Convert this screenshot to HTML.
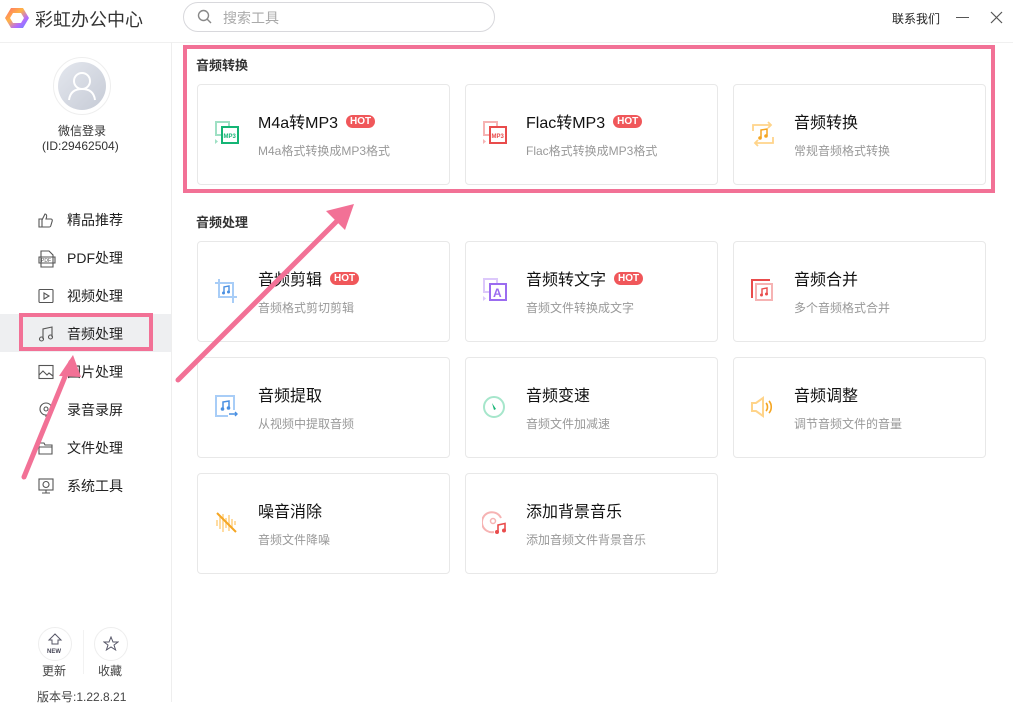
<!DOCTYPE html>
<html><head><meta charset="utf-8"><style>
*{margin:0;padding:0;box-sizing:border-box}
body{width:1013px;height:702px;background:#fff;position:relative;overflow:hidden;font-family:"Liberation Sans","Noto Sans CJK SC",sans-serif;color:#222}
.a{position:absolute}
.card{position:absolute;width:253px;height:101px;border:1px solid #e8e8e8;border-radius:4px;background:#fff}
.card .t{position:absolute;left:60px;top:29px;font-size:16px;color:#111;white-space:nowrap;line-height:20px}
.card .s{position:absolute;left:60px;top:58px;font-size:12px;color:#999;white-space:nowrap;line-height:16px}
.hot{display:inline-block;background:#f0575a;color:#fff;font-size:10px;font-weight:bold;border-radius:7px;padding:0 4px;height:13px;line-height:13px;vertical-align:4px;margin-left:8px}
.card svg{position:absolute;left:16px;top:36px}
.nav{position:absolute;left:0;width:171px;height:38px;font-size:14px;color:#222}
.nav span{position:absolute;left:67px;top:9px}
.nav svg{position:absolute;left:38px;top:11px}
.sec{position:absolute;left:196px;font-size:13px;font-weight:bold;color:#333}
</style></head><body>
<!-- header -->
<svg class="a" style="left:4px;top:5px" width="26" height="26" viewBox="0 0 26 26"><defs><linearGradient id="g" x1="0" y1="0" x2="1" y2="1"><stop offset="0" stop-color="#ff6a6a"/><stop offset=".4" stop-color="#ffb347"/><stop offset=".7" stop-color="#b36bff"/><stop offset="1" stop-color="#5b8cff"/></linearGradient></defs><path d="M7 3h12l6 10-6 10H7L1 13z M9 8l-3 5 3 5h8l3-5-3-5z" fill="url(#g)" fill-rule="evenodd"/></svg>
<div class="a" style="left:35px;top:6px;font-size:18px;color:#333">彩虹办公中心</div>
<div class="a" style="left:183px;top:2px;width:312px;height:30px;border:1px solid #d8d8dc;border-radius:15px"></div>
<svg class="a" style="left:197px;top:9px" width="16" height="16" viewBox="0 0 16 16"><circle cx="6.5" cy="6.5" r="5" fill="none" stroke="#888" stroke-width="1.4"/><path d="M10 10l4 4" stroke="#888" stroke-width="1.4"/></svg>
<div class="a" style="left:223px;top:8px;font-size:14px;color:#aaa">搜索工具</div>
<div class="a" style="left:892px;top:10px;font-size:12px;color:#222">联系我们</div>
<div class="a" style="left:956px;top:17px;width:13px;height:1px;background:#555"></div>
<svg class="a" style="left:990px;top:11px" width="13" height="13"><path d="M1 1l11 11M12 1L1 12" stroke="#555" stroke-width="1.2"/></svg>
<div class="a" style="left:0;top:42px;width:1013px;height:1px;background:#f0f0f0"></div>
<div class="a" style="left:171px;top:42px;width:1px;height:660px;background:#eee"></div>
<!-- profile -->
<div class="a" style="left:53px;top:57px;width:58px;height:58px;border-radius:50%;border:1px solid #eee;background:#fff"></div>
<div class="a" style="left:58px;top:62px;width:48px;height:48px;border-radius:50%;background:linear-gradient(135deg,#e4e7ee,#c6cbd6)"></div>
<svg class="a" style="left:58px;top:62px" width="48" height="48"><circle cx="24" cy="19" r="8" fill="none" stroke="#fff" stroke-width="2"/><path d="M11 38c1-8 6-11 13-11s12 3 13 11" fill="none" stroke="#fff" stroke-width="2"/></svg>
<div class="a" style="left:58px;top:122px;font-size:12px;color:#333">微信登录</div>
<div class="a" style="left:42px;top:139px;font-size:12px;color:#333">(ID:29462504)</div>
<!-- nav -->
<div class="nav" style="top:201px"><svg width="16" height="16" viewBox="0 0 16 16" fill="none" stroke="#555" stroke-width="1.1"><path d="M1 7h3v8H1zM4 8l3-6c1 0 2 1 1.6 3L8 7h5c1 0 1.5 1 1.2 2l-1.5 5c-.2.6-.7 1-1.3 1H4"/></svg><span>精品推荐</span></div>
<div class="nav" style="top:239px"><svg width="18" height="18" viewBox="0 0 18 18" fill="none" stroke="#555" stroke-width="1.1"><path d="M3 1h8l4 4v12H3zM1 7h16v6H1z"/><text x="3" y="12" font-size="5" fill="#555" stroke="none" font-family="Liberation Sans">PDF</text></svg><span>PDF处理</span></div>
<div class="nav" style="top:277px"><svg width="16" height="16" fill="none" stroke="#555" stroke-width="1.1"><rect x="1" y="1.5" width="14" height="13" rx="1"/><path d="M6 5v6l5-3z"/></svg><span>视频处理</span></div>
<div class="a" style="left:0;top:314px;width:171px;height:38px;background:#eeeff1"></div>
<div class="nav" style="top:315px"><svg width="16" height="16" fill="none" stroke="#555" stroke-width="1.1"><path d="M5 13V3l9-2v10"/><circle cx="3.5" cy="13" r="2"/><circle cx="12.5" cy="11" r="2"/></svg><span>音频处理</span></div>
<div class="nav" style="top:353px"><svg width="16" height="16" fill="none" stroke="#555" stroke-width="1.1"><rect x="1" y="1.5" width="14" height="13"/><path d="M1 11l4-4 4 4 2-2 4 3"/></svg><span>图片处理</span></div>
<div class="nav" style="top:391px"><svg width="16" height="16" fill="none" stroke="#555" stroke-width="1.1"><circle cx="8" cy="7" r="6"/><circle cx="8" cy="7" r="2"/><path d="M8 13v2"/></svg><span>录音录屏</span></div>
<div class="nav" style="top:429px"><svg width="16" height="16" fill="none" stroke="#555" stroke-width="1.1"><path d="M1 3h5l1 2h7v9H1zM1 7h13"/></svg><span>文件处理</span></div>
<div class="nav" style="top:467px"><svg width="16" height="16" fill="none" stroke="#555" stroke-width="1.1"><rect x="1" y="1" width="14" height="11"/><circle cx="8" cy="6.5" r="3"/><path d="M8 12v3M4 15h8"/></svg><span>系统工具</span></div>
<!-- bottom -->
<div class="a" style="left:38px;top:627px;width:34px;height:34px;border-radius:50%;border:1px solid #eee"></div>
<svg class="a" style="left:46px;top:633px" width="18" height="22"><path d="M9 1L3 7h3v4h6V7h3z" fill="none" stroke="#556" stroke-width="1"/><text x="1" y="20" font-size="6" font-weight="bold" fill="#445" font-family="Liberation Sans">NEW</text></svg>
<div class="a" style="left:83px;top:630px;width:1px;height:44px;background:#f2f2f2"></div>
<div class="a" style="left:94px;top:627px;width:34px;height:34px;border-radius:50%;border:1px solid #eee"></div>
<svg class="a" style="left:103px;top:636px" width="16" height="16"><path d="M8 1l2 5h5l-4 3 1.6 5L8 11l-4.6 3L5 9 1 6h5z" fill="none" stroke="#556" stroke-width="1"/></svg>
<div class="a" style="left:42px;top:662px;font-size:12px;color:#444">更新</div>
<div class="a" style="left:98px;top:662px;font-size:12px;color:#444">收藏</div>
<div class="a" style="left:37px;top:688px;font-size:12px;color:#444">版本号:1.22.8.21</div>
<!-- sections -->
<div class="sec" style="top:55px">音频转换</div>
<div class="sec" style="top:212px">音频处理</div>
<div class="card" style="left:197px;top:84px"><svg width="26" height="26"><rect x="2" y="1" width="13" height="13" fill="none" stroke="#9fe0c4" stroke-width="2"/><rect x="8" y="6" width="16" height="16" fill="#fff" stroke="#15b575" stroke-width="2"/><text x="9.5" y="17" font-size="6" font-weight="bold" fill="#15b575" font-family="Liberation Sans">MP3</text><path d="M1 18v5l3-2.5z" fill="#9fe0c4"/></svg><div class="t">M4a转MP3<span class="hot">HOT</span></div><div class="s">M4a格式转换成MP3格式</div></div>
<div class="card" style="left:465px;top:84px"><svg width="26" height="26"><rect x="2" y="1" width="13" height="13" fill="none" stroke="#f6b3b3" stroke-width="2"/><rect x="8" y="6" width="16" height="16" fill="#fff" stroke="#e94c4c" stroke-width="2"/><text x="9.5" y="17" font-size="6" font-weight="bold" fill="#e94c4c" font-family="Liberation Sans">MP3</text><path d="M1 18v5l3-2.5z" fill="#f6b3b3"/></svg><div class="t">Flac转MP3<span class="hot">HOT</span></div><div class="s">Flac格式转换成MP3格式</div></div>
<div class="card" style="left:733px;top:84px"><svg width="26" height="26"><path d="M3 10V4h18M18 1l3 3-3 3M23 16v6H5M8 25l-3-3 3-3" fill="none" stroke="#ffd48a" stroke-width="1.8"/><path d="M11 17V9l6-1v7" fill="none" stroke="#f5a623" stroke-width="1.5"/><circle cx="10" cy="17" r="1.8" fill="#f5a623"/><circle cx="16" cy="15" r="1.8" fill="#f5a623"/></svg><div class="t">音频转换</div><div class="s">常规音频格式转换</div></div>
<div class="card" style="left:197px;top:241px"><svg width="26" height="26"><path d="M5 1v18h18M1 5h18v20" fill="none" stroke="#a8cdf7" stroke-width="2"/><path d="M10 15V9l5-1v6" fill="none" stroke="#4a90e2" stroke-width="1.4"/><circle cx="9.5" cy="15" r="1.5" fill="#4a90e2"/><circle cx="14.5" cy="14" r="1.5" fill="#4a90e2"/></svg><div class="t">音频剪辑<span class="hot">HOT</span></div><div class="s">音频格式剪切剪辑</div></div>
<div class="card" style="left:465px;top:241px"><svg width="26" height="26"><rect x="2" y="1" width="13" height="13" fill="none" stroke="#dcc8fb" stroke-width="2"/><rect x="8" y="6" width="16" height="16" fill="#fff" stroke="#9b6cf0" stroke-width="2"/><text x="11" y="19" font-size="12" font-weight="bold" fill="#9b6cf0" font-family="Liberation Sans">A</text><path d="M1 18v5l3-2.5z" fill="#dcc8fb"/></svg><div class="t">音频转文字<span class="hot">HOT</span></div><div class="s">音频文件转换成文字</div></div>
<div class="card" style="left:733px;top:241px"><svg width="26" height="26"><path d="M2 20V2h18" fill="none" stroke="#e94c4c" stroke-width="2"/><rect x="6" y="6" width="16" height="16" fill="none" stroke="#f6b3b3" stroke-width="2"/><path d="M12 17v-6l5-1v6" fill="none" stroke="#e94c4c" stroke-width="1.4"/><circle cx="11.5" cy="17" r="1.5" fill="#e94c4c"/><circle cx="16.5" cy="16" r="1.5" fill="#e94c4c"/></svg><div class="t">音频合并</div><div class="s">多个音频格式合并</div></div>
<div class="card" style="left:197px;top:357px"><svg width="26" height="26"><path d="M20 16V2H2v20h12" fill="none" stroke="#a8cdf7" stroke-width="2"/><path d="M9 15V8l6-1v7" fill="none" stroke="#4a90e2" stroke-width="1.5"/><circle cx="8.5" cy="15" r="1.8" fill="#4a90e2"/><circle cx="14.5" cy="14" r="1.8" fill="#4a90e2"/><path d="M15 20h8M21 18l2 2-2 2" fill="none" stroke="#4a90e2" stroke-width="1.4"/></svg><div class="t">音频提取</div><div class="s">从视频中提取音频</div></div>
<div class="card" style="left:465px;top:357px"><svg width="26" height="26"><circle cx="12" cy="13" r="10" fill="none" stroke="#a6e6cb" stroke-width="2"/><path d="M10 9l4 6-2 1z" fill="#15b575"/></svg><div class="t">音频变速</div><div class="s">音频文件加减速</div></div>
<div class="card" style="left:733px;top:357px"><svg width="26" height="26"><path d="M2 9h4l7-5v18l-7-5H2z" fill="none" stroke="#ffd48a" stroke-width="2"/><path d="M16 9c2 2 2 6 0 8M19 7c3 3 3 9 0 12" fill="none" stroke="#f5a623" stroke-width="1.6"/></svg><div class="t">音频调整</div><div class="s">调节音频文件的音量</div></div>
<div class="card" style="left:197px;top:473px"><svg width="26" height="26"><path d="M3 10v6M6 7v12M9 4v18M12 8v10M15 5v16M18 9v8M21 11v4" stroke="#ffd48a" stroke-width="1.6"/><path d="M3 3l19 19" stroke="#f5a623" stroke-width="2"/></svg><div class="t">噪音消除</div><div class="s">音频文件降噪</div></div>
<div class="card" style="left:465px;top:473px"><svg width="26" height="26"><path d="M19 8A10 10 0 1 0 12 22" fill="none" stroke="#f6b3b3" stroke-width="2"/><circle cx="11" cy="11" r="2.5" fill="none" stroke="#f6b3b3" stroke-width="1.5"/><path d="M16 22v-7l7-1.5v7" fill="none" stroke="#e94c4c" stroke-width="1.6"/><circle cx="15" cy="22" r="2" fill="#e94c4c"/><circle cx="22" cy="20.5" r="2" fill="#e94c4c"/></svg><div class="t">添加背景音乐</div><div class="s">添加音频文件背景音乐</div></div>
<!-- annotations -->
<div class="a" style="left:183px;top:45px;width:812px;height:148px;border:4px solid #f27196"></div>
<div class="a" style="left:19px;top:313px;width:134px;height:38px;border:4px solid #f27196"></div>
<svg class="a" style="left:0;top:0" width="1013" height="702"><g stroke="#f27196" stroke-width="5" stroke-linecap="round" fill="none"><path d="M178 380L348 210"/><path d="M24 477L71 362"/></g><path d="M354 204l-28 7 19 19z" fill="#f27196"/><path d="M73 355l-14 21 22 1z" fill="#f27196"/></svg>
</body></html>
